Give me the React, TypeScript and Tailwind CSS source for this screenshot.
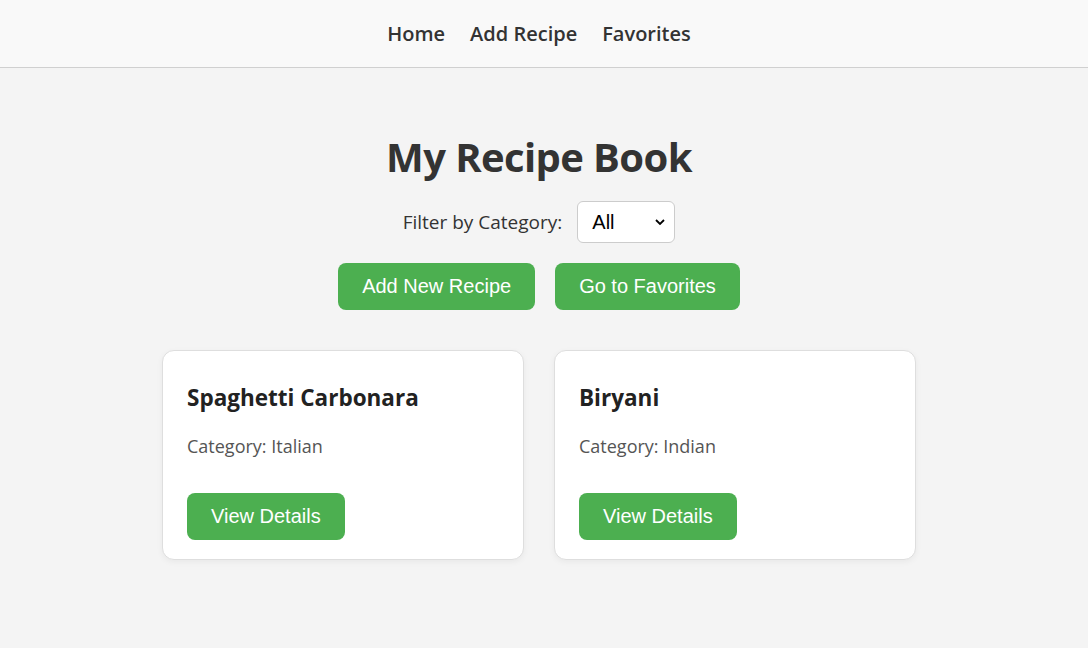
const recipes = [
  { name: "Spaghetti Carbonara", category: "Italian" },
  { name: "Biryani", category: "Indian" },
];

function GreenButton({ label }: { label: string }) {
  return (
    <button className="h-[47px] px-6 rounded-lg bg-[#4caf50] text-white text-[20px] leading-[23px] font-['Liberation_Sans',Arial,sans-serif]">
      {label}
    </button>
  );
}

export default function App() {
  return (
    <div className="min-h-screen bg-[#f4f4f4] font-['Open_Sans',sans-serif] text-[#333]">
      {/* Nav */}
      <nav className="h-[68px] bg-[#f9f9f9] border-b border-[#d0d0d0] pr-[10px] flex items-center justify-center gap-[25px] text-[20px] font-semibold text-[#333]">
        <a href="#">Home</a>
        <a href="#">Add Recipe</a>
        <a href="#">Favorites</a>
      </nav>

      {/* Main */}
      <main className="pr-[10px] flex flex-col items-center">
        <h1 className="mt-[65px] text-[40px] leading-[48px] font-bold tracking-[-0.6px] text-[#333]">
          My Recipe Book
        </h1>

        {/* Filter */}
        <div className="mt-[20px] flex items-center gap-[15px]">
          <label className="text-[19px] text-[#333]">Filter by Category:</label>
          <div className="relative">
            <select className="appearance-none w-[98px] h-[42px] rounded-md border border-[#ccc] bg-white pl-[14px] text-[20px] text-black font-['Liberation_Sans',Arial,sans-serif] outline-none">
              <option>All</option>
              <option>Italian</option>
              <option>Indian</option>
            </select>
            <svg
              className="pointer-events-none absolute right-[10px] top-1/2 -translate-y-1/2"
              width="10"
              height="7"
              viewBox="0 0 10 7"
            >
              <path d="M1 1.5l4 4 4-4" fill="none" stroke="#000" strokeWidth="1.8" />
            </svg>
          </div>
        </div>

        {/* Actions */}
        <div className="mt-[20px] flex gap-[20px]">
          <GreenButton label="Add New Recipe" />
          <GreenButton label="Go to Favorites" />
        </div>

        {/* Cards */}
        <div className="mt-[40px] flex gap-[30px]">
          {recipes.map((r) => (
            <div
              key={r.name}
              className="w-[362px] bg-white border border-[#dedede] rounded-xl shadow-[0_2px_6px_rgba(0,0,0,0.05)] pt-[33px] pb-[19px] px-6 flex flex-col items-start"
            >
              <h2 className="text-[22.5px] leading-[28px] font-bold text-[#222]">{r.name}</h2>
              <p className="mt-[22px] text-[18px] leading-[24px] text-[#555]">
                Category: {r.category}
              </p>
              <div className="mt-[35px]">
                <GreenButton label="View Details" />
              </div>
            </div>
          ))}
        </div>
      </main>
    </div>
  );
}
